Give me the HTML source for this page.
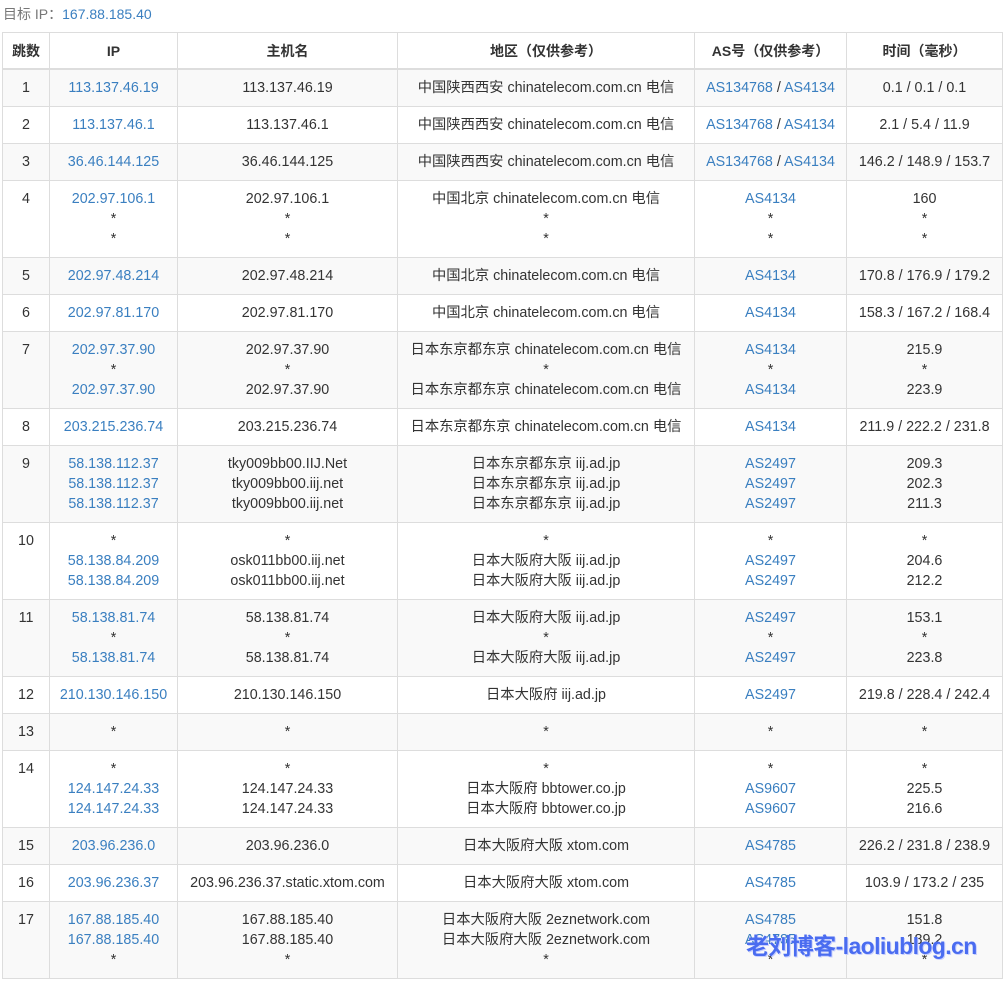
<!DOCTYPE html>
<html><head><meta charset="utf-8"><style>
body{margin:0;background:#fff;font-family:"Liberation Sans","Noto Sans CJK SC",sans-serif;font-size:14px;color:#333;}
.top{position:absolute;left:3px;top:4px;line-height:20px;color:#777;}
.top a{color:#3a7fc0}
table{position:absolute;left:2px;top:32px;width:1000px;border-collapse:collapse;table-layout:fixed;}
td,th{border:1px solid #ddd;text-align:center;line-height:20px;padding:8px 0;vertical-align:top;white-space:nowrap;overflow:visible;font-size:14.3px}
th{font-weight:bold;border-bottom:2px solid #ddd;padding:8px 0 7px;color:#333;font-size:14px}
tbody tr:nth-child(odd){background:#f9f9f9}
a{color:#3a7fc0;text-decoration:none}
.wm{position:absolute;left:746px;top:929px;font-size:23px;font-weight:bold;color:#4a6cf0;letter-spacing:-0.6px;text-shadow:1px 1px 0 #c8d0ff;line-height:34px}
</style></head><body>
<div class="top">目标 IP：<a>167.88.185.40</a></div>
<table>
<colgroup><col style="width:47px"><col style="width:128px"><col style="width:220px"><col style="width:297px"><col style="width:152px"><col style="width:156px"></colgroup>
<thead><tr><th>跳数</th><th>IP</th><th>主机名</th><th>地区（仅供参考）</th><th>AS号（仅供参考）</th><th>时间（毫秒）</th></tr></thead>
<tbody>
<tr><td>1</td><td><a>113.137.46.19</a></td><td>113.137.46.19</td><td>中国陕西西安 chinatelecom.com.cn 电信</td><td><a>AS134768</a> / <a>AS4134</a></td><td>0.1 / 0.1 / 0.1</td></tr>
<tr><td>2</td><td><a>113.137.46.1</a></td><td>113.137.46.1</td><td>中国陕西西安 chinatelecom.com.cn 电信</td><td><a>AS134768</a> / <a>AS4134</a></td><td>2.1 / 5.4 / 11.9</td></tr>
<tr><td>3</td><td><a>36.46.144.125</a></td><td>36.46.144.125</td><td>中国陕西西安 chinatelecom.com.cn 电信</td><td><a>AS134768</a> / <a>AS4134</a></td><td>146.2 / 148.9 / 153.7</td></tr>
<tr><td>4</td><td><a>202.97.106.1</a><br>*<br>*</td><td>202.97.106.1<br>*<br>*</td><td>中国北京 chinatelecom.com.cn 电信<br>*<br>*</td><td><a>AS4134</a><br>*<br>*</td><td>160<br>*<br>*</td></tr>
<tr><td>5</td><td><a>202.97.48.214</a></td><td>202.97.48.214</td><td>中国北京 chinatelecom.com.cn 电信</td><td><a>AS4134</a></td><td>170.8 / 176.9 / 179.2</td></tr>
<tr><td>6</td><td><a>202.97.81.170</a></td><td>202.97.81.170</td><td>中国北京 chinatelecom.com.cn 电信</td><td><a>AS4134</a></td><td>158.3 / 167.2 / 168.4</td></tr>
<tr><td>7</td><td><a>202.97.37.90</a><br>*<br><a>202.97.37.90</a></td><td>202.97.37.90<br>*<br>202.97.37.90</td><td>日本东京都东京 chinatelecom.com.cn 电信<br>*<br>日本东京都东京 chinatelecom.com.cn 电信</td><td><a>AS4134</a><br>*<br><a>AS4134</a></td><td>215.9<br>*<br>223.9</td></tr>
<tr><td>8</td><td><a>203.215.236.74</a></td><td>203.215.236.74</td><td>日本东京都东京 chinatelecom.com.cn 电信</td><td><a>AS4134</a></td><td>211.9 / 222.2 / 231.8</td></tr>
<tr><td>9</td><td><a>58.138.112.37</a><br><a>58.138.112.37</a><br><a>58.138.112.37</a></td><td>tky009bb00.IIJ.Net<br>tky009bb00.iij.net<br>tky009bb00.iij.net</td><td>日本东京都东京 iij.ad.jp<br>日本东京都东京 iij.ad.jp<br>日本东京都东京 iij.ad.jp</td><td><a>AS2497</a><br><a>AS2497</a><br><a>AS2497</a></td><td>209.3<br>202.3<br>211.3</td></tr>
<tr><td>10</td><td>*<br><a>58.138.84.209</a><br><a>58.138.84.209</a></td><td>*<br>osk011bb00.iij.net<br>osk011bb00.iij.net</td><td>*<br>日本大阪府大阪 iij.ad.jp<br>日本大阪府大阪 iij.ad.jp</td><td>*<br><a>AS2497</a><br><a>AS2497</a></td><td>*<br>204.6<br>212.2</td></tr>
<tr><td>11</td><td><a>58.138.81.74</a><br>*<br><a>58.138.81.74</a></td><td>58.138.81.74<br>*<br>58.138.81.74</td><td>日本大阪府大阪 iij.ad.jp<br>*<br>日本大阪府大阪 iij.ad.jp</td><td><a>AS2497</a><br>*<br><a>AS2497</a></td><td>153.1<br>*<br>223.8</td></tr>
<tr><td>12</td><td><a>210.130.146.150</a></td><td>210.130.146.150</td><td>日本大阪府 iij.ad.jp</td><td><a>AS2497</a></td><td>219.8 / 228.4 / 242.4</td></tr>
<tr><td>13</td><td>*</td><td>*</td><td>*</td><td>*</td><td>*</td></tr>
<tr><td>14</td><td>*<br><a>124.147.24.33</a><br><a>124.147.24.33</a></td><td>*<br>124.147.24.33<br>124.147.24.33</td><td>*<br>日本大阪府 bbtower.co.jp<br>日本大阪府 bbtower.co.jp</td><td>*<br><a>AS9607</a><br><a>AS9607</a></td><td>*<br>225.5<br>216.6</td></tr>
<tr><td>15</td><td><a>203.96.236.0</a></td><td>203.96.236.0</td><td>日本大阪府大阪 xtom.com</td><td><a>AS4785</a></td><td>226.2 / 231.8 / 238.9</td></tr>
<tr><td>16</td><td><a>203.96.236.37</a></td><td>203.96.236.37.static.xtom.com</td><td>日本大阪府大阪 xtom.com</td><td><a>AS4785</a></td><td>103.9 / 173.2 / 235</td></tr>
<tr><td>17</td><td><a>167.88.185.40</a><br><a>167.88.185.40</a><br>*</td><td>167.88.185.40<br>167.88.185.40<br>*</td><td>日本大阪府大阪 2eznetwork.com<br>日本大阪府大阪 2eznetwork.com<br>*</td><td><a>AS4785</a><br><a>AS4785</a><br>*</td><td>151.8<br>189.2<br>*</td></tr>
</tbody></table>
<div class="wm">老刘博客-laoliublog.cn</div>
</body></html>
